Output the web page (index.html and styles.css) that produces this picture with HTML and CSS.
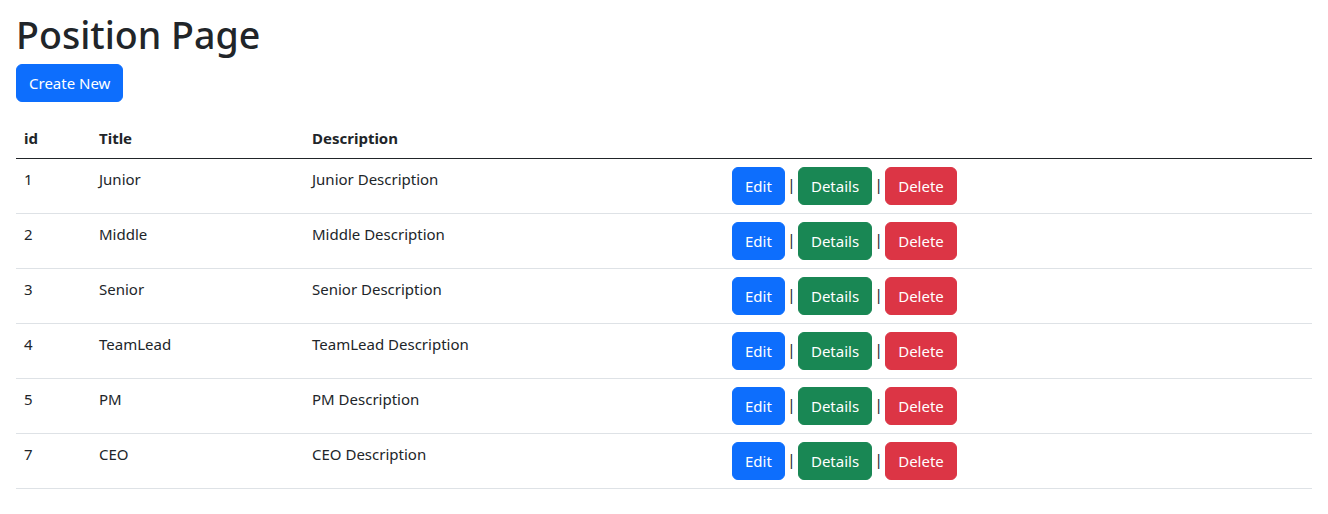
FILE: index.html
```html
<!DOCTYPE html>
<html lang="en">
<head>
<meta charset="utf-8">
<title>Position Page</title>
<link rel="stylesheet" href="styles.css">
</head>
<body>
<main class="container">
  <h1 class="title">Position Page</h1>
  <p class="actions-top"><a class="btn btn-primary" href="#">Create New</a></p>
  <table class="table">
    <thead>
      <tr>
        <th class="col-id">id</th>
        <th class="col-title">Title</th>
        <th class="col-desc">Description</th>
        <th></th>
      </tr>
    </thead>
    <tbody>
      <tr>
        <td>1</td><td>Junior</td><td>Junior Description</td>
        <td class="cell-actions"><a class="btn btn-primary" href="#">Edit</a> | <a class="btn btn-success" href="#">Details</a> | <a class="btn btn-danger" href="#">Delete</a></td>
      </tr>
      <tr>
        <td>2</td><td>Middle</td><td>Middle Description</td>
        <td class="cell-actions"><a class="btn btn-primary" href="#">Edit</a> | <a class="btn btn-success" href="#">Details</a> | <a class="btn btn-danger" href="#">Delete</a></td>
      </tr>
      <tr>
        <td>3</td><td>Senior</td><td>Senior Description</td>
        <td class="cell-actions"><a class="btn btn-primary" href="#">Edit</a> | <a class="btn btn-success" href="#">Details</a> | <a class="btn btn-danger" href="#">Delete</a></td>
      </tr>
      <tr>
        <td>4</td><td>TeamLead</td><td>TeamLead Description</td>
        <td class="cell-actions"><a class="btn btn-primary" href="#">Edit</a> | <a class="btn btn-success" href="#">Details</a> | <a class="btn btn-danger" href="#">Delete</a></td>
      </tr>
      <tr>
        <td>5</td><td>PM</td><td>PM Description</td>
        <td class="cell-actions"><a class="btn btn-primary" href="#">Edit</a> | <a class="btn btn-success" href="#">Details</a> | <a class="btn btn-danger" href="#">Delete</a></td>
      </tr>
      <tr>
        <td>7</td><td>CEO</td><td>CEO Description</td>
        <td class="cell-actions"><a class="btn btn-primary" href="#">Edit</a> | <a class="btn btn-success" href="#">Details</a> | <a class="btn btn-danger" href="#">Delete</a></td>
      </tr>
    </tbody>
  </table>
</main>
</body>
</html>
```
FILE: styles.css
```css
* { box-sizing: border-box; }
html, body { margin: 0; padding: 0; }
body {
  font-family: "Noto Sans", "Open Sans", sans-serif;
  font-size: 15px;
  line-height: 24px;
  color: #212529;
  background: #fff;
}
.container {
  padding: 8px 16px 0;
}
.title {
  margin: 0 0 5px;
  padding-top: 3px;
  font-size: 37.6px;
  font-weight: 500;
  line-height: 48px;
}
.actions-top {
  margin: 0 0 16px;
}
.btn {
  display: inline-block;
  padding: 6px 12px;
  font-size: 15px;
  line-height: 24px;
  border: 1px solid transparent;
  border-radius: 6px;
  color: #fff;
  text-decoration: none;
  vertical-align: middle;
  word-spacing: normal;
}
.btn-primary { background: #0d6efd; border-color: #0d6efd; }
.btn-success { background: #198754; border-color: #198754; }
.btn-danger { background: #dc3545; border-color: #dc3545; }
.table {
  width: 100%;
  border-collapse: collapse;
  margin-bottom: 16px;
}
.table th, .table td {
  padding: 8px;
  text-align: left;
  vertical-align: top;
  border-bottom: 1px solid #dee2e6;
}
.table th {
  font-weight: 700;
  border-bottom: 1px solid #212529;
}
.table .cell-actions {
  word-spacing: -1.5px;
}
.col-id { width: 75px; }
.col-title { width: 213px; }
.col-desc { width: 420px; }
```
